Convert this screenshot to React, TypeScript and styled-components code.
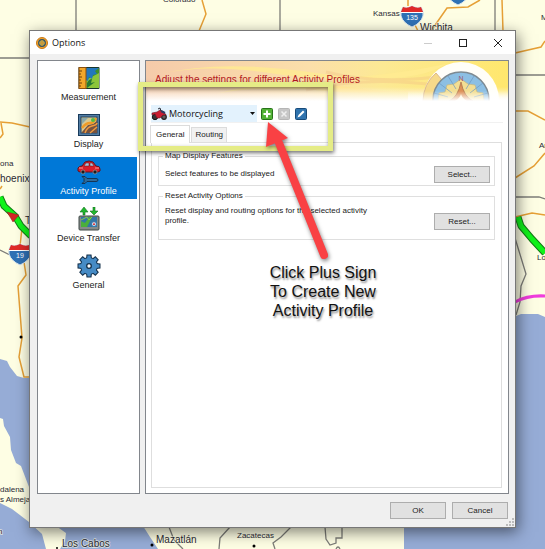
import React, { useState } from "react";
import styled, { createGlobalStyle } from "styled-components";

const GlobalStyle = createGlobalStyle`
  * { box-sizing: border-box; }
  body { margin: 0; font-family: "Liberation Sans", Arial, sans-serif; color: #222; }
  button, fieldset { font: inherit; color: inherit; }
`;

const Desktop = styled.div`
  position: relative;
  display: flex;
  min-height: 100vh;
  padding: 30px 29px 21px;
  overflow: hidden;
`;

const MapBackdrop = styled.svg`
  position: absolute;
  inset: 0;
  width: 100%;
  height: 100%;
`;

const Window = styled.section`
  position: relative;
  flex: 1;
  display: flex;
  flex-direction: column;
  min-width: 0;
  border: 1px solid #777;
  background: #f0f0f0;
  box-shadow: 2px 4px 14px rgba(0, 0, 0, 0.5);
`;

const TitleBar = styled.header`
  display: flex;
  align-items: center;
  height: 23px;
  padding-left: 6px;
  background: #fff;
  font: 9px/12px "Open Sans", sans-serif;
  color: #111;
`;

const Title = styled.h1`
  flex: 1;
  margin: 0;
  padding-left: 4px;
  font: inherit;
`;

const CaptionButton = styled.button`
  display: grid;
  place-items: center;
  width: 35px;
  height: 22px;
  padding: 0;
  border: 0;
  background: none;
  color: #222;
  &:disabled { color: #ccc; }
`;

const Body = styled.div`
  flex: 1;
  display: flex;
  gap: 5px;
  padding: 6px 6px 0 7px;
`;

const Sidebar = styled.nav`
  display: flex;
  flex-direction: column;
  gap: 5px;
  flex: 0 0 103px;
  padding: 2px;
  border: 1px solid #82868c;
  background: #fff;
`;

const NavItem = styled.button<{ $active: boolean }>`
  display: flex;
  flex-direction: column;
  align-items: center;
  gap: 1px;
  height: 42px;
  padding: 3px 0 0;
  border: 0;
  background: ${(p) => (p.$active ? "#0078d7" : "transparent")};
  color: ${(p) => (p.$active ? "#fff" : "#222")};
  font-size: 9px;
  line-height: 12px;
`;

const Panel = styled.main`
  position: relative;
  flex: 1;
  display: flex;
  flex-direction: column;
  min-width: 0;
  border: 1px solid #82868c;
  background: #fff;
`;

const Banner = styled.div`
  position: relative;
  height: 40px;
  overflow: hidden;
`;

const BannerArt = styled.svg`
  position: absolute;
  top: 0;
  height: 40px;
`;

const BannerSky = styled(BannerArt)`
  left: 0;
  width: 100%;
`;

const BannerCompass = styled(BannerArt)`
  right: 0;
  width: 100px;
`;

const BannerText = styled.h2`
  position: relative;
  margin: 0;
  padding: 13px 0 0 9px;
  color: #b3191d;
  font-size: 10px;
  font-weight: 400;
  line-height: 12px;
`;

const Toolbar = styled.div`
  display: flex;
  align-items: center;
  gap: 4px;
  margin: 0 5px;
  padding: 4px 0 0;
  height: 22px;
  border-bottom: 1px solid #f1f1f1;
`;

const ProfilePicker = styled.button`
  display: flex;
  align-items: center;
  gap: 2px;
  width: 106px;
  height: 17px;
  padding: 0 2px 0 0;
  border: 0;
  background: #e3f2fd;
  color: #111;
  font: 9px/12px "Open Sans", sans-serif;
`;

const ProfileName = styled.span`
  flex: 1;
  text-align: left;
`;

const ToolButton = styled.button`
  display: grid;
  width: 12px;
  height: 12px;
  padding: 0;
  border: 0;
  background: none;
  & + & { margin-left: 1px; }
`;

const TabList = styled.div`
  position: relative;
  z-index: 1;
  display: flex;
  align-items: flex-end;
  gap: 1px;
  height: 19px;
  padding: 3px 0 0 4px;
`;

const Tab = styled.button<{ $active: boolean }>`
  height: ${(p) => (p.$active ? "18px" : "15px")};
  margin-bottom: ${(p) => (p.$active ? "-1px" : "0")};
  padding: 0 ${(p) => (p.$active ? "5px" : "3px")};
  border: 1px solid #dcdcdc;
  border-bottom: 0;
  background: ${(p) => (p.$active ? "#fff" : "#f1f1f1")};
  font-size: 8px;
  line-height: 12px;
  color: #222;
`;

const TabPanel = styled.div`
  flex: 1;
  margin: 0 6px 5px 5px;
  padding: 8px 6px;
  border: 1px solid #dedede;
  font-size: 8px;
  line-height: 10px;
`;

const Group = styled.fieldset`
  display: flex;
  align-items: flex-start;
  justify-content: space-between;
  min-width: 0;
  margin: 0 0 5px;
  padding: 5px 4px 2px 6px;
  border: 1px solid #dfdfdf;
`;

const Legend = styled.legend`
  margin-left: -2px;
  padding: 0 2px;
`;

const GroupText = styled.p<{ $tall?: boolean }>`
  width: 216px;
  min-height: ${(p) => (p.$tall ? "31px" : "17px")};
  margin: 0;
  padding-top: ${(p) => (p.$tall ? "0" : "3px")};
`;

const PushButton = styled.button<{ $low?: boolean }>`
  width: 56px;
  height: 17px;
  margin-top: ${(p) => (p.$low ? "7px" : "0")};
  padding: 0;
  border: 1px solid #adadad;
  background: #e1e1e1;
  font-size: 8px;
  line-height: 12px;
  color: #222;
`;

const Footer = styled.footer`
  display: flex;
  justify-content: flex-end;
  gap: 6px;
  height: 33px;
  padding: 8px 7px 0;
`;

const Grip = styled.svg`
  position: absolute;
  right: 1px;
  bottom: 1px;
`;

const Callout = styled.div`
  position: absolute;
  top: 21px;
  left: -8px;
  width: 195px;
  height: 69px;
  border: 5px solid #e5ec86;
  box-shadow: 1px 2px 4px rgba(0, 0, 0, 0.55), inset 1px 2px 4px rgba(0, 0, 0, 0.5);
  pointer-events: none;
  z-index: 2;
`;

const CalloutArrow = styled.svg`
  position: absolute;
  top: 56px;
  left: 114px;
  filter: drop-shadow(1px 2px 2px rgba(0, 0, 0, 0.5));
  pointer-events: none;
  z-index: 3;
`;

const CalloutText = styled.p`
  position: absolute;
  top: 202px;
  left: 107px;
  width: 140px;
  margin: 0;
  color: #111;
  font-size: 16px;
  line-height: 19px;
  text-align: center;
  text-shadow: 1px 2px 2px rgba(0, 0, 0, 0.45);
`;

function Shield({ x, y, label }: { x: number; y: number; label: string }) {
  return (
    <g transform={`translate(${x} ${y})`}>
      <path d="M2 2 Q6 4 11 1 Q16 4 20 2 Q23 6 22 11 Q20 18 11 22 Q2 18 0 11 Q-1 6 2 2Z" fill="#2f71b5" stroke="#dce8f0" strokeWidth="1" />
      <path d="M2 2 Q6 4 11 1 Q16 4 20 2 L22 7 H0Z" fill="#e02a28" />
      <path d="M0 7.500 H22" stroke="#fff" strokeWidth="1" />
      <text x="11" y="15" textAnchor="middle" fontSize="7" fontFamily="Liberation Sans" fill="#fff">{label}</text>
    </g>
  );
}

const places = [
  { x: 163, y: 2, size: 8, name: "Colorado" },
  { x: 373, y: 16, size: 8, name: "Kansas" },
  { x: 420, y: 31, size: 10, name: "Wichita" },
  { x: 541, y: 20, size: 8, name: "M" },
  { x: 539, y: 148, size: 8, name: "Ar" },
  { x: 537, y: 260, size: 8, name: "Lo" },
  { x: 0, y: 166, size: 8, name: "ona" },
  { x: 0, y: 182, size: 10, name: "hoenix" },
  { x: 25, y: 224, size: 10, name: "T" },
  { x: 0, y: 492, size: 8, name: "dalena" },
  { x: 0, y: 502, size: 8, name: "s Almejas" },
  { x: -2, y: 534, size: 8, name: "n" },
  { x: 62, y: 547, size: 10, name: "Los Cabos" },
  { x: 156, y: 543, size: 10, name: "Mazatlán" },
  { x: 237, y: 538, size: 8, name: "Zacatecas" },
];

function WorldMap() {
  return (
    <MapBackdrop viewBox="0 0 545 549" preserveAspectRatio="xMidYMid slice" aria-label="Map">
      <rect width="545" height="549" fill="#fefee4" />
      <g fill="#96acd6">
        <path d="M0 359 L7 361 L10 367 L17 376 L24 378 H60 V528 H40 L29 487 L21 466 L16 463 L11 450 L10 437 L4 426 L3 419 L0 418Z" />
        <path d="M0 503 L12 509 L29 522 L42 534 L46 549 H0Z" />
        <path d="M56 526 L66 533 L65 541 L60 549 H158 L150 537 L143 526Z" />
        <path d="M404 549 V316 H516 L521 314 H538 L545 317 V549Z" />
      </g>
      <g fill="none" stroke="#7d7d78" strokeWidth="1.300">
        <path d="M76 0V31M280 0V31M495 0V31M0 58H30M515 75H545M0 250L12 256M515 197H539L545 199M515 238L526 274L521 286L520 302L516 315" />
        <path d="M169 527L174 540L183 549M230 527L220 538L219 549M291 527L281 537L273 543L275 549M325 527L326 539L330 545L336 543V538H342V527M336 549Q338 545 340 549" />
      </g>
      <g fill="none" stroke="#e6a036" strokeWidth="1.500">
        <path d="M202 0L206 14L199 31M502 0L503 31M408 0V6M415 25L418 31M431 31L447 8L468 7L480 0M515 53L541 47L545 41M515 111H528L545 120M515 178L534 166L545 153M515 217L532 213L545 215M0 122L12 123L30 127M1 123L3 134L0 138M0 189L2 186M22 228L20 246M24 262L26 275L18 286L22 338L19 357L24 377H30" />
      </g>
      <path d="M515 302Q528 295 545 296" fill="none" stroke="#f03cdd" strokeWidth="3" />
      <g fill="none" strokeLinejoin="round">
        <path d="M0 197L4 206L15 216L21 226L31 236M518 217L521 226L532 239L545 253" stroke="#157a18" strokeWidth="7" />
        <path d="M0 197L4 206L15 216L21 226L31 236M518 217L521 226L532 239L545 253" stroke="#10f31a" strokeWidth="5" />
      </g>
      <path d="M7 212L19 215L13 222Z" fill="#d42525" stroke="#8c2020" strokeWidth="0.500" />
      <Shield x={401} y={5} label="135" />
      <Shield x={447} y={-17} label="" />
      <Shield x={9} y={243} label="19" />
      <g fill="#000">
        <circle cx="21" cy="337" r="1.500" />
        <circle cx="152" cy="545" r="1.500" />
        <circle cx="254" cy="546" r="1.500" />
        <circle cx="57" cy="548" r="1" />
      </g>
      <g fontFamily="Liberation Sans" fill="#2a2a35" stroke="#fefee4" strokeWidth="1.500" strokeOpacity="0.700" paintOrder="stroke">
        {places.map((p) => (
          <text key={p.name} x={p.x} y={p.y} fontSize={p.size}>{p.name}</text>
        ))}
      </g>
    </MapBackdrop>
  );
}

const MeasurementIcon = () => (
  <svg width="24" height="24" viewBox="0 0 24 24" aria-hidden="true">
    <rect x="1.500" y="1" width="21" height="22" rx="1" fill="#17352b" />
    <path d="M9 2H22V22H9Z" fill="#3d8f2c" />
    <path d="M9 14L22 7V22H9Z" fill="#8cc63a" />
    <path d="M9 2H22L18 5L20 8L16 9L15 13L12 11L11 15L9 14Z" fill="#2277bd" />
    <path d="M10 22V17Q12 13 15 13L14 17L18 16" fill="#267936" />
    <rect x="2" y="1.500" width="7" height="21" fill="#f2a72b" stroke="#8b4f0d" />
    <path d="M2 5H5M2 8H4M2 11H5M2 14H4M2 17H5M2 20H4" stroke="#704008" />
  </svg>
);

const DisplayIcon = () => (
  <svg width="24" height="24" viewBox="0 0 24 24" aria-hidden="true">
    <rect x="1" y="1" width="22" height="22" fill="#193b5c" />
    <rect x="2" y="2" width="20" height="20" fill="#527da4" />
    <rect x="4" y="4" width="16" height="16" fill="#d8c892" stroke="#24435d" />
    <path d="M5 19L11 12L16 11L20 8V20H5Z" fill="#765340" />
    <path d="M5 15Q9 10 13 10T19 5" stroke="#ef9b27" strokeWidth="2.500" fill="none" />
    <path d="M8 20Q10 14 15 13T20 10M13 20L20 14" stroke="#ef9a3e" strokeWidth="1.500" fill="none" />
    <path d="M5 5H11L8 8L5 11Z" fill="#8aa9ab" />
    <circle cx="16" cy="7" r="2" fill="#52bd45" />
  </svg>
);

const ActivityIcon = () => (
  <svg width="24" height="24" viewBox="0 0 24 24" aria-hidden="true">
    <path d="M1 11V8Q2 6 5 6L8 2Q12 0 16 2L19 6Q23 6 23 9V11L21 12H3Z" fill="#d91e2b" stroke="#65121a" />
    <path d="M7 6L9 3H12V6ZM13 3H15L17 6H13Z" fill="#a8c8e0" stroke="#64131b" strokeWidth=".5" />
    <path d="M2 8H6M18 8H22" stroke="#ff9995" />
    <circle cx="6" cy="12" r="2" fill="#1a1c21" stroke="#aaa" strokeWidth=".6" />
    <circle cx="18" cy="12" r="2" fill="#1a1c21" stroke="#aaa" strokeWidth=".6" />
    <path d="M5 16.500H8L10 18.500H19Q21 18.500 21 20T19 21.500H10L8 23.500H5L7 21.500V18.500Z" fill="#2f6a98" stroke="#152e48" strokeWidth=".9" strokeLinejoin="round" />
  </svg>
);

const TransferIcon = () => (
  <svg width="24" height="24" viewBox="0 0 24 24" aria-hidden="true">
    <rect x="2" y="9" width="20" height="14" rx="1" fill="#858b89" stroke="#3e4946" />
    <rect x="4" y="10" width="16" height="10" fill="#3276a7" />
    <path d="M4 20V14L8 16L12 10H15L10 20Z" fill="#4aaf3c" />
    <path d="M4 13L10 10L12 13L15 10" stroke="#88c945" fill="none" />
    <circle cx="17" cy="17" r="2.500" fill="#cee2f2" stroke="#3373a6" />
    <path d="M16 18L17 15L18 18Z" fill="#d22" />
    <path d="M6 8V5H3L7 0L11 5H8V8ZM16 0V4H13L17 8L21 4H18V0Z" fill="#20b72d" stroke="#16731e" strokeWidth=".6" />
  </svg>
);

const teeth = [0, 45, 90, 135, 180, 225, 270, 315];

const GearIcon = () => (
  <svg width="24" height="24" viewBox="0 0 24 24" aria-hidden="true">
    <g fill="#15314b">
      {teeth.map((angle) => (
        <path key={angle} d="M9 5L9.500 .5H14.500L15 5Z" transform={`rotate(${angle} 12 12)`} />
      ))}
      <circle cx="12" cy="12" r="9" />
    </g>
    <g fill="#468bc5">
      {teeth.map((angle) => (
        <path key={angle} d="M10 5L10.500 1.500H13.500L14 5Z" transform={`rotate(${angle} 12 12)`} />
      ))}
      <circle cx="12" cy="12" r="8" />
    </g>
    <circle cx="12" cy="12" r="2.300" fill="#fff" stroke="#15314b" strokeWidth="1.300" />
  </svg>
);

const MotorcycleIcon = () => (
  <svg width="16" height="16" viewBox="0 0 16 16" aria-hidden="true">
    <circle cx="4" cy="11" r="2.700" fill="#353338" stroke="#17191b" />
    <circle cx="13" cy="11" r="2.300" fill="#655d5e" stroke="#201c1f" strokeWidth="1.200" />
    <path d="M1 7L6 6L9 4L13 6L15 9H12L9 12H6L4 8L1 9Z" fill="#c91d32" stroke="#701923" strokeWidth=".6" />
    <path d="M7 3L9 2L10 5" fill="none" stroke="#2c303a" />
    <path d="M10 5L14 7" stroke="#2d3b61" strokeWidth="2" />
  </svg>
);

const Compass = () => (
  <BannerCompass viewBox="0 0 100 40" aria-hidden="true">
    <defs>
      <linearGradient id="compassFade" x2="0" y2="1">
        <stop offset=".75" stopColor="#fff" stopOpacity="0" /><stop offset="1" stopColor="#fff" />
      </linearGradient>
    </defs>
    <circle cx="53" cy="39" r="38" fill="#fff" fillOpacity=".95" />
    <path d="M15 40A38 38 0 0 1 28 12L34 19A28 28 0 0 0 25 40Z" fill="#f6d98a" stroke="#dcb98c" />
    <circle cx="53" cy="39" r="28" fill="#8cbfe3" stroke="#7d8a92" strokeWidth="1.500" />
    <path d="M30 40L31 32L37 31L39 24L46 23L53 18L60 23L67 24L69 31L75 32L76 40Z" fill="#f3de93" stroke="#c3b783" strokeWidth=".7" />
    <path d="M26 32L40 36M31 22L44 32M40 15L48 28M66 15L58 28M75 22L62 32M80 32L66 36" stroke="#6d9ac3" strokeWidth=".7" fill="none" />
    <path d="M41 40Q50 36 53 21Q56 36 65 40Z" fill="#dd9058" stroke="#a56b48" strokeWidth=".7" />
    <path d="M47 40Q52 37 53 33Q54 37 59 40Z" fill="#fff6d8" />
    <text x="53" y="20" fontSize="7" textAnchor="middle" fontFamily="Liberation Sans" fill="#9c5876">N</text>
    <rect width="100" height="40" fill="url(#compassFade)" />
  </BannerCompass>
);

const BannerBackground = () => (
  <BannerSky viewBox="0 0 362 40" preserveAspectRatio="none" aria-hidden="true">
    <defs>
      <linearGradient id="sky"><stop stopColor="#f5cbaa" /><stop offset=".45" stopColor="#fbdfaa" /><stop offset=".65" stopColor="#fce994" /><stop offset="1" stopColor="#ffe76d" /></linearGradient>
      <linearGradient id="fade" x2="0" y2="1"><stop offset=".65" stopColor="#fff" stopOpacity="0" /><stop offset="1" stopColor="#fff" /></linearGradient>
    </defs>
    <rect width="362" height="40" fill="url(#sky)" />
    <path d="M15 13Q75 -2 170 12T300 3Q200 24 130 13T15 13Z" fill="#ffeb91" opacity=".8" />
    <path d="M70 33Q130 16 210 27T340 18Q250 36 180 30T70 33Z" fill="#ffe490" opacity=".8" />
    <path d="M180 11Q230 24 300 15M160 29Q220 15 290 24" fill="none" stroke="#f2bd83" strokeWidth="3" opacity=".35" />
    <rect width="362" height="40" fill="url(#fade)" />
  </BannerSky>
);

const navItems = [
  { label: "Measurement", Icon: MeasurementIcon },
  { label: "Display", Icon: DisplayIcon },
  { label: "Activity Profile", Icon: ActivityIcon },
  { label: "Device Transfer", Icon: TransferIcon },
  { label: "General", Icon: GearIcon },
];

export default function App() {
  const [section, setSection] = useState("Activity Profile");
  const [tab, setTab] = useState("General");

  return (
    <Desktop>
      <GlobalStyle />
      <WorldMap />
      <Window aria-label="Options">
        <TitleBar>
          <svg width="12" height="12" viewBox="0 0 12 12" aria-hidden="true">
            <circle cx="6" cy="6" r="5.500" fill="#f1a32b" stroke="#c87816" />
            <circle cx="6" cy="6" r="3.300" fill="#a9a55a" stroke="#315368" strokeWidth="1.300" />
            <path d="M6 3V9M3 6H9" stroke="#d89730" />
          </svg>
          <Title>Options</Title>
          <CaptionButton aria-label="Minimize" disabled>
            <svg width="8" height="8"><path d="M0 4.500H8" stroke="currentColor" /></svg>
          </CaptionButton>
          <CaptionButton aria-label="Maximize">
            <svg width="8" height="8"><rect x=".5" y=".5" width="7" height="7" fill="none" stroke="currentColor" /></svg>
          </CaptionButton>
          <CaptionButton aria-label="Close">
            <svg width="8" height="8"><path d="M0 0L8 8M8 0L0 8" stroke="currentColor" /></svg>
          </CaptionButton>
        </TitleBar>
        <Body>
          <Sidebar>
            {navItems.map(({ label, Icon }) => (
              <NavItem key={label} $active={section === label} onClick={() => setSection(label)}>
                <Icon />
                {label}
              </NavItem>
            ))}
          </Sidebar>
          <Panel>
            <Banner>
              <BannerBackground />
              <Compass />
              <BannerText>Adjust the settings for different Activity Profiles</BannerText>
            </Banner>
            <Toolbar>
              <ProfilePicker aria-haspopup="listbox">
                <MotorcycleIcon />
                <ProfileName>Motorcycling</ProfileName>
                <svg width="5" height="3" aria-hidden="true"><path d="M0 0H5L2.500 3Z" fill="#111" /></svg>
              </ProfilePicker>
              <ToolButton aria-label="Add profile">
                <svg width="12" height="12"><rect x=".5" y=".5" width="11" height="11" rx="1" fill="#52b236" stroke="#27731a" /><path d="M6 2.500V9.500M2.500 6H9.500" stroke="#fff" strokeWidth="2" /></svg>
              </ToolButton>
              <ToolButton aria-label="Delete profile" disabled>
                <svg width="12" height="12"><rect x=".5" y=".5" width="11" height="11" rx="1" fill="#c6c6c6" stroke="#b5b5b5" /><path d="M3.500 3.500L8.500 8.500M8.500 3.500L3.500 8.500" stroke="#eee" strokeWidth="1.500" /></svg>
              </ToolButton>
              <ToolButton aria-label="Edit profile">
                <svg width="12" height="12"><rect x=".5" y=".5" width="11" height="11" rx="1" fill="#2f73ae" stroke="#174a79" /><path d="M2.500 9.500L3.500 7L8 2.500L9.500 4L5 8.500Z" fill="#fff" /></svg>
              </ToolButton>
            </Toolbar>
            <TabList role="tablist">
              {["General", "Routing"].map((name) => (
                <Tab key={name} role="tab" aria-selected={tab === name} $active={tab === name} onClick={() => setTab(name)}>
                  {name}
                </Tab>
              ))}
            </TabList>
            <TabPanel role="tabpanel">
              <Group>
                <Legend>Map Display Features</Legend>
                <GroupText>Select features to be displayed</GroupText>
                <PushButton>Select...</PushButton>
              </Group>
              <Group>
                <Legend>Reset Activity Options</Legend>
                <GroupText $tall>Reset display and routing options for the selected activity profile.</GroupText>
                <PushButton $low>Reset...</PushButton>
              </Group>
            </TabPanel>
            <Callout />
            <CalloutArrow width="74" height="150" viewBox="0 0 74 150" aria-hidden="true">
              <path d="M64 138L19 26" stroke="#f94144" strokeWidth="8" strokeLinecap="round" />
              <path d="M8 5L28 21L6 30Z" fill="#f94144" />
            </CalloutArrow>
            <CalloutText>Click Plus Sign<br />To Create New<br />Activity Profile</CalloutText>
          </Panel>
        </Body>
        <Footer>
          <PushButton>OK</PushButton>
          <PushButton>Cancel</PushButton>
        </Footer>
        <Grip width="8" height="8" aria-hidden="true">
          <path d="M6 0H8V2H6ZM3 3H5V5H3ZM6 3H8V5H6ZM0 6H2V8H0ZM3 6H5V8H3ZM6 6H8V8H6Z" fill="#bcbcbc" />
        </Grip>
      </Window>
    </Desktop>
  );
}
